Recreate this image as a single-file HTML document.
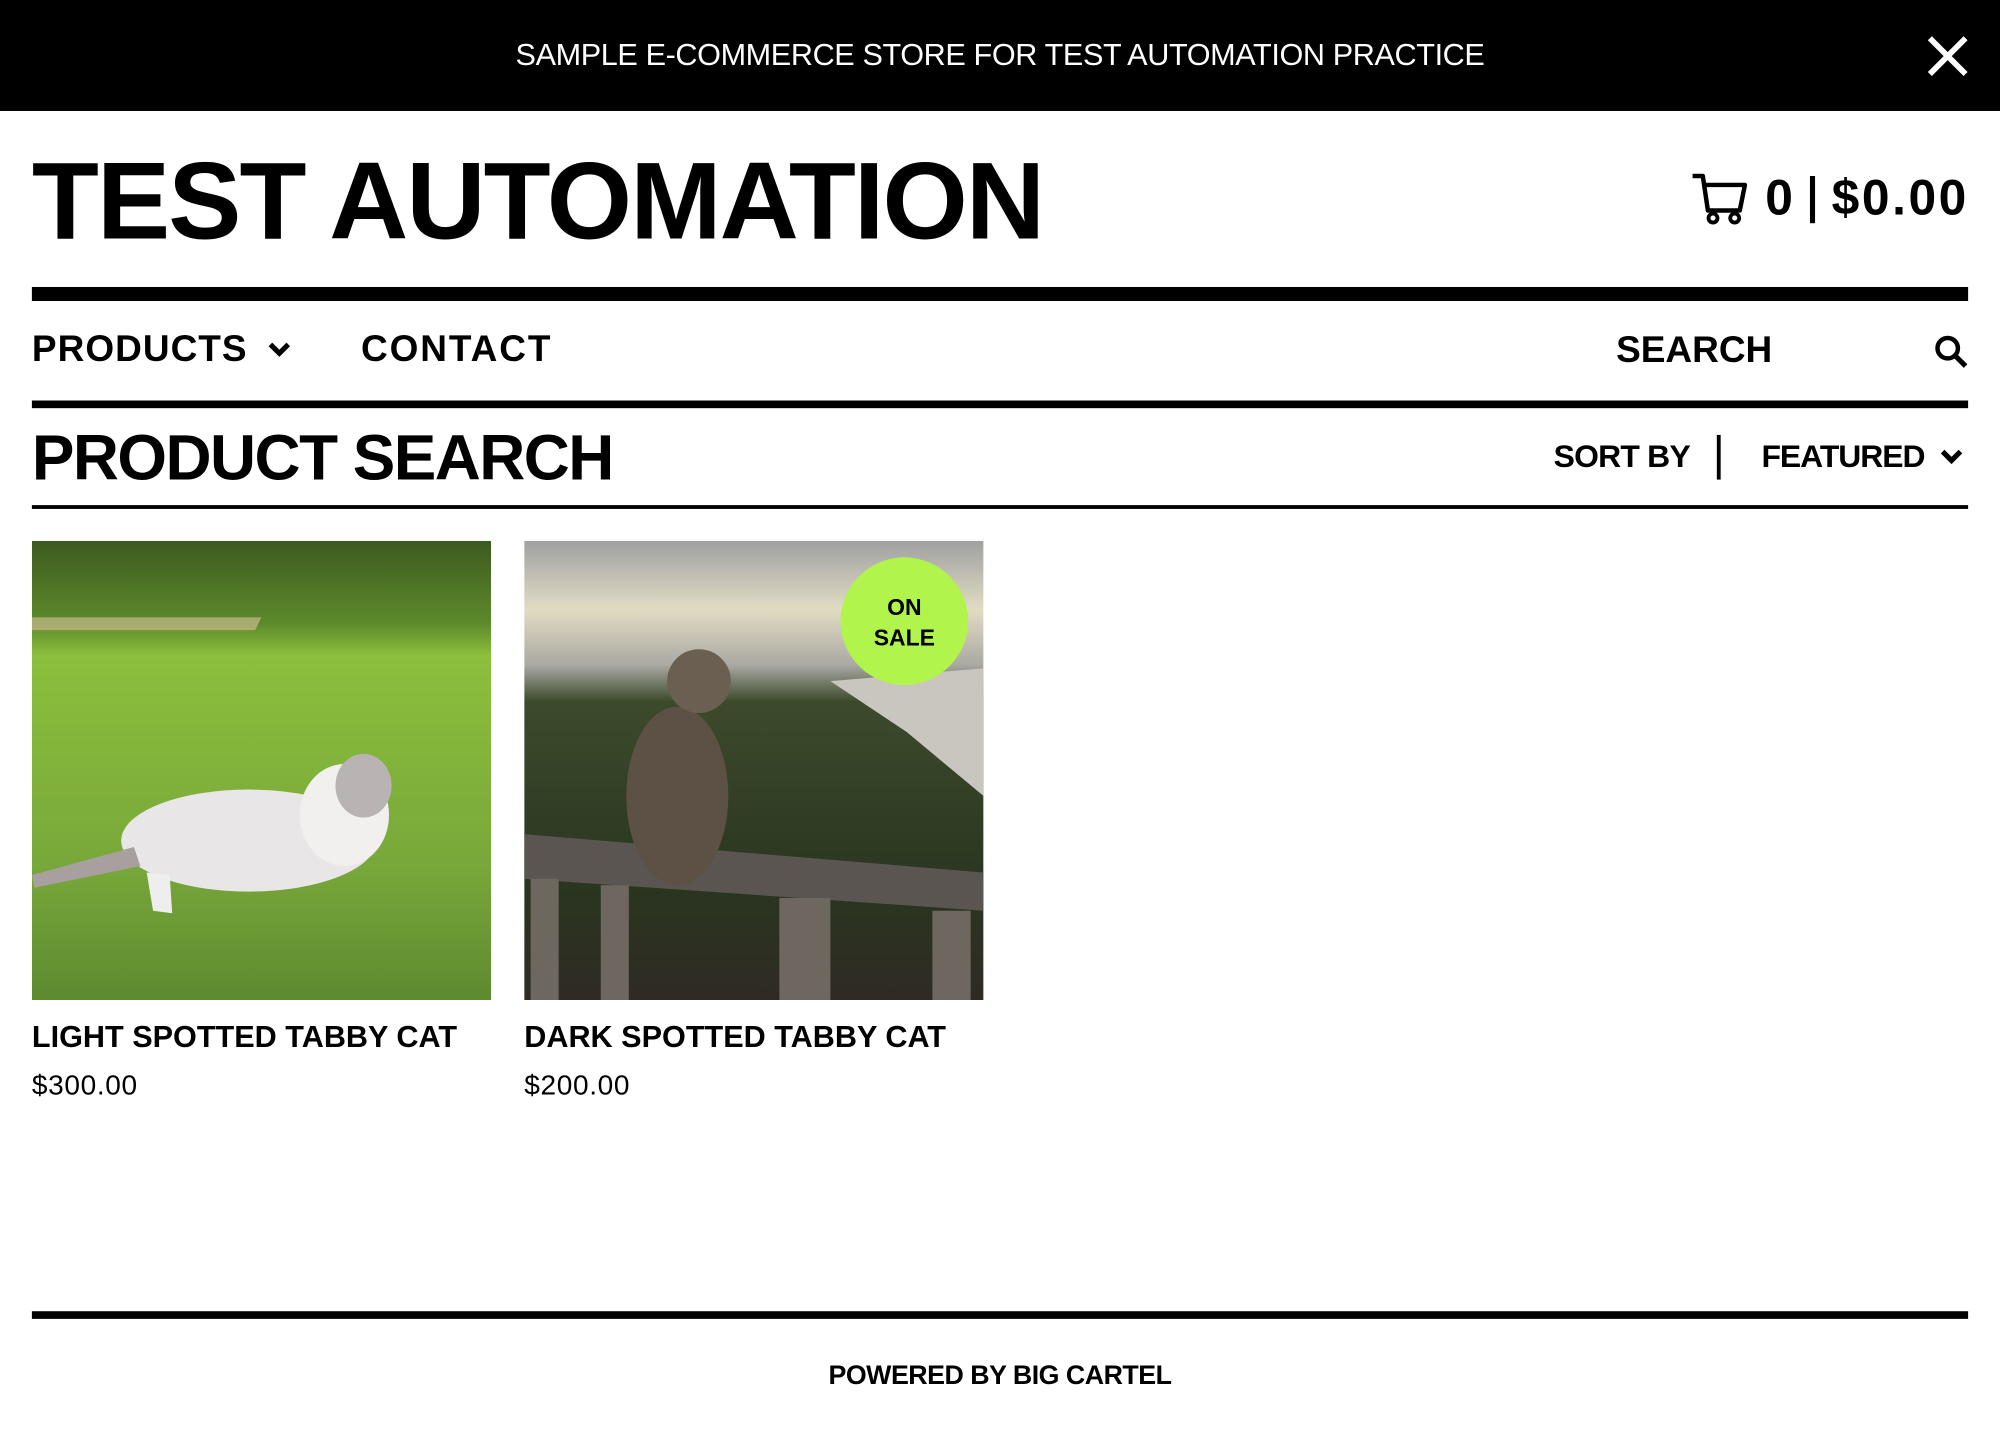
<!DOCTYPE html>
<html><head><meta charset="utf-8"><style>
html,body{margin:0;padding:0;background:#fff;overflow:hidden;width:2000px;height:1432px}
#w{width:1568px;height:1123px;transform:scale(1.27551);transform-origin:0 0;position:relative;font-family:"Liberation Sans",sans-serif;color:#000}
.a{position:absolute;white-space:nowrap;font-weight:bold;line-height:1}
.r{position:absolute;background:#000;left:25px;width:1518px}
</style></head><body><div id="w">
<div style="position:absolute;left:0;top:0;width:1568px;height:87px;background:#000"></div>
<div class="a" style="left:0;width:1568px;text-align:center;top:32px;font-size:24px;font-weight:normal;color:#fff;letter-spacing:-0.3px">SAMPLE E-COMMERCE STORE FOR TEST AUTOMATION PRACTICE</div>
<svg style="position:absolute;left:1510px;top:27px" width="34" height="34" viewBox="0 0 34 34"><path d="M3 3L31 31M31 3L3 31" stroke="#fff" stroke-width="4.5"/></svg>

<div class="a" style="left:25px;top:115px;font-size:86px;letter-spacing:-1.5px">TEST AUTOMATION</div>
<svg style="position:absolute;left:1326px;top:135px" width="46" height="42" viewBox="0 0 46 42"><path d="M1 3H9L13 30H38L42 10H11" fill="none" stroke="#000" stroke-width="3.5" stroke-linejoin="round"/><circle cx="17" cy="36" r="3.5" fill="none" stroke="#000" stroke-width="3"/><circle cx="34" cy="36" r="3.5" fill="none" stroke="#000" stroke-width="3"/></svg>
<div class="a" style="left:1384px;top:136px;font-size:39px">0</div>
<div style="position:absolute;left:1419px;top:138px;width:4px;height:37px;background:#000"></div>
<div class="a" style="left:1436px;top:136px;font-size:39px;letter-spacing:2px">$0.00</div>

<div class="r" style="top:225px;height:11px"></div>
<div class="a" style="left:25px;top:260px;font-size:29px;letter-spacing:0.8px">PRODUCTS</div>
<svg style="position:absolute;left:209px;top:267px" width="20" height="14" viewBox="0 0 20 14"><path d="M3 3L10 10L17 3" fill="none" stroke="#000" stroke-width="4"/></svg>
<div class="a" style="left:283px;top:260px;font-size:29px;letter-spacing:1.5px">CONTACT</div>
<div class="a" style="left:1267px;top:261px;font-size:29px">SEARCH</div>
<svg style="position:absolute;left:1516px;top:262px" width="28" height="28" viewBox="0 0 28 28"><circle cx="11" cy="11" r="8" fill="none" stroke="#000" stroke-width="3.5"/><path d="M17 17L25 25" stroke="#000" stroke-width="4"/></svg>
<div class="r" style="top:314px;height:6px"></div>

<div class="a" style="left:25px;top:334px;font-size:50px;letter-spacing:-1.2px">PRODUCT SEARCH</div>
<div class="a" style="left:1218px;top:346px;font-size:25px;letter-spacing:-0.6px">SORT BY</div>
<div style="position:absolute;left:1346px;top:341px;width:3px;height:35px;background:#000"></div>
<div class="a" style="left:1381px;top:346px;font-size:25px;letter-spacing:-0.8px">FEATURED</div>
<svg style="position:absolute;left:1520px;top:351px" width="20" height="14" viewBox="0 0 20 14"><path d="M3 3L10 10L17 3" fill="none" stroke="#000" stroke-width="4"/></svg>
<div class="r" style="top:396px;height:3px"></div>

<svg style="position:absolute;left:25px;top:424px" width="360" height="360" viewBox="0 0 360 360">
<defs><linearGradient id="g1" x1="0" y1="0" x2="0" y2="1"><stop offset="0" stop-color="#3d5a1f"/><stop offset="0.18" stop-color="#5d8a2c"/><stop offset="0.25" stop-color="#8cbf3c"/><stop offset="0.7" stop-color="#79a83a"/><stop offset="1" stop-color="#5e8a30"/></linearGradient></defs>
<rect width="360" height="360" fill="url(#g1)"/>
<path d="M0 60L180 60L175 70L0 70Z" fill="#c9b98a" opacity=".7"/>
<ellipse cx="170" cy="235" rx="100" ry="40" fill="#e8e6e6"/>
<ellipse cx="245" cy="215" rx="35" ry="40" fill="#f2f0ef"/>
<path d="M80 240L0 262L2 272L85 255Z" fill="#a89f9f"/>
<ellipse cx="260" cy="192" rx="22" ry="25" fill="#b9b4b3"/>
<path d="M90 260L95 290L110 292L108 262Z" fill="#eee"/>
</svg>
<svg style="position:absolute;left:411px;top:424px" width="360" height="360" viewBox="0 0 360 360">
<defs><linearGradient id="g2" x1="0" y1="0" x2="0" y2="1"><stop offset="0" stop-color="#9fa0a0"/><stop offset="0.15" stop-color="#e2dcc4"/><stop offset="0.27" stop-color="#aaa9a3"/><stop offset="0.35" stop-color="#3c4a2c"/><stop offset="0.75" stop-color="#2a3620"/><stop offset="1" stop-color="#2f2a24"/></linearGradient></defs>
<rect width="360" height="360" fill="url(#g2)"/>
<path d="M240 110L360 100L360 200L300 150Z" fill="#c9c6bf"/>
<path d="M0 230L360 260L360 290L0 265Z" fill="#5a5550"/>
<rect x="5" y="265" width="22" height="95" fill="#6e6760"/><rect x="60" y="270" width="22" height="90" fill="#6e6760"/><rect x="200" y="280" width="40" height="80" fill="#6e6760"/><rect x="320" y="290" width="30" height="70" fill="#6e6760"/>
<ellipse cx="120" cy="200" rx="40" ry="70" fill="#5c5144"/>
<ellipse cx="137" cy="110" rx="25" ry="25" fill="#6a5f50"/>
</svg>
<div style="position:absolute;left:659px;top:437px;width:100px;height:100px;border-radius:50%;background:#b0f44c"></div>
<div class="a" style="left:659px;width:100px;text-align:center;top:464px;font-size:18px;line-height:24px">ON<br>SALE</div>

<div class="a" style="left:25px;top:802px;font-size:24px;letter-spacing:0px">LIGHT SPOTTED TABBY CAT</div>
<div class="a" style="left:25px;top:840px;font-size:22px;font-weight:normal;letter-spacing:0.5px">$300.00</div>
<div class="a" style="left:411px;top:802px;font-size:24px;letter-spacing:0px">DARK SPOTTED TABBY CAT</div>
<div class="a" style="left:411px;top:840px;font-size:22px;font-weight:normal;letter-spacing:0.5px">$200.00</div>

<div class="r" style="top:1028px;height:6px"></div>
<div class="a" style="left:0;width:1568px;text-align:center;top:1068px;font-size:21px;letter-spacing:-0.4px">POWERED BY BIG CARTEL</div>
</div></body></html>
